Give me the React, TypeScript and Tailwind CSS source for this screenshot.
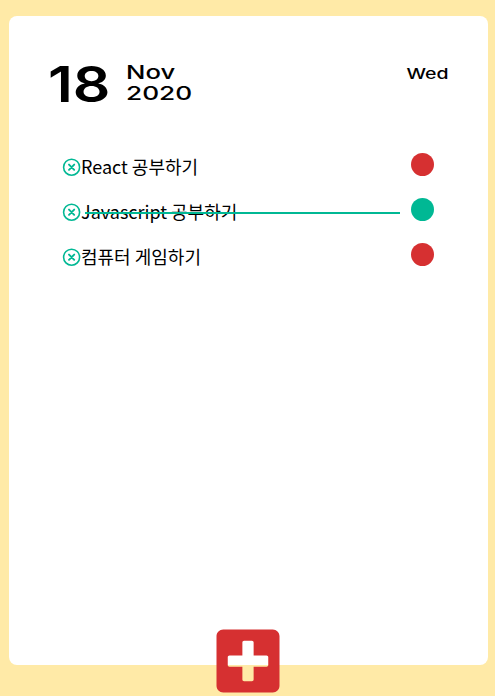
import { FaPlusSquare } from "react-icons/fa";

const todos = [
  { text: "React 공부하기", done: false },
  { text: "Javascript 공부하기", done: true },
  { text: "컴퓨터 게임하기", done: false },
];

function RemoveIcon() {
  return (
    <svg viewBox="0 0 20 20" className="size-5 shrink-0 text-[#00b894]" fill="none" stroke="currentColor" strokeLinecap="round">
      <circle cx="10.6" cy="10.2" r="8" strokeWidth="1.6" />
      <path d="M8 7.6l5.2 5.2M13.2 7.6l-5.2 5.2" strokeWidth="1.9" />
    </svg>
  );
}

export default function App() {
  return (
    <div className="flex h-[696px] w-[495px] flex-col bg-[#ffeaa7] pt-4 pr-[7px] pl-[9px] font-['Noto_Sans_CJK_KR',sans-serif] text-black">
      <main className="relative h-[649px] rounded-lg bg-white">
        <header className="flex h-[128px] items-start pt-[46px] pr-10 pl-[39px] font-['Inter',sans-serif]">
          <div className="mt-px h-[44px] w-[78px] origin-left scale-x-[1.2] text-[49px] leading-[44px] font-semibold">18</div>
          <div className="flex-1 text-[19px] leading-[21px] font-medium">
            <div className="w-[50px] origin-left scale-x-[1.35]">Nov</div>
            <div className="w-[50px] origin-left scale-x-[1.38]">2020</div>
          </div>
          <div className="mt-px w-[32px] origin-right scale-x-[1.3] text-right text-[15px] leading-[21px] font-medium">Wed</div>
        </header>
        <ul>
          {todos.map((todo) => (
            <li key={todo.text} className="relative flex h-[45px] items-center pr-[54px] pl-[52px]">
              <RemoveIcon />
              <span className="mb-0.5 flex-1 text-[18px] leading-[26px] whitespace-nowrap">{todo.text}</span>
              {todo.done && <span className="absolute top-[23px] left-[76px] h-0.5 w-[315px] bg-[#00b894]" />}
              <span className={`mb-[5px] size-[23px] rounded-full ${todo.done ? "bg-[#00b894]" : "bg-[#d63031]"}`} />
            </li>
          ))}
        </ul>
        <button className="absolute top-[609px] left-[203px]" aria-label="Add">
          <FaPlusSquare className="size-[72px] text-[#d63031]" />
        </button>
      </main>
    </div>
  );
}
